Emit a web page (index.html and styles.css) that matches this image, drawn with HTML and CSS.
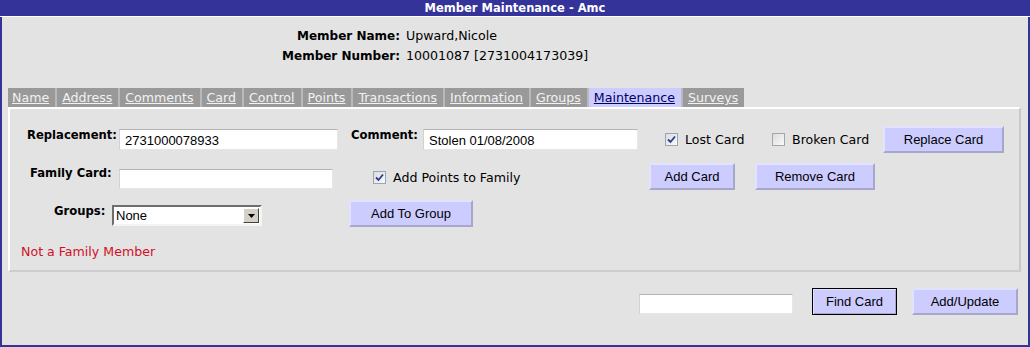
FILE: index.html
```html
<!DOCTYPE html>
<html lang="en">
<head>
    <meta charset="UTF-8">
    <title>Member Maintenance - Amc</title>
    <link rel="stylesheet" href="styles.css">
</head>
<body>
    <div class="window">
        <div class="title-bar">Member Maintenance - Amc</div>
        <div class="content">
            <div class="member-info">
                <span class="info-label">Member Name:</span>
                <span>Upward,Nicole</span>
                <span class="info-label">Member Number:</span>
                <span>10001087 [2731004173039]</span>
            </div>

            <ul class="tabs">
                <li><a href="#">Name</a></li>
                <li><a href="#">Address</a></li>
                <li><a href="#">Comments</a></li>
                <li><a href="#">Card</a></li>
                <li><a href="#">Control</a></li>
                <li><a href="#">Points</a></li>
                <li><a href="#">Transactions</a></li>
                <li><a href="#">Information</a></li>
                <li><a href="#">Groups</a></li>
                <li class="active"><a href="#">Maintenance</a></li>
                <li><a href="#">Surveys</a></li>
            </ul>

            <div class="panel">
                <div class="form-row">
                    <label class="field-label lbl-replacement">Replacement:</label>
                    <input type="text" class="text-input in-replacement" value="2731000078933">
                    <label class="field-label lbl-comment">Comment:</label>
                    <input type="text" class="text-input in-comment" value="Stolen 01/08/2008">
                    <span class="check chk-lost">
                        <svg width="9" height="9" viewBox="0 0 9 9"><path d="M1 4.5 L3.5 7 L8 1.5" fill="none" stroke="#2a3a8c" stroke-width="1.8"/></svg>
                    </span>
                    <span class="check-text txt-lost">Lost Card</span>
                    <span class="check"></span>
                    <span class="check-text txt-broken">Broken Card</span>
                    <button class="btn btn-replace">Replace Card</button>
                </div>

                <div class="form-row">
                    <label class="field-label lbl-family">Family Card:</label>
                    <input type="text" class="text-input in-family" value="">
                    <span class="check chk-points">
                        <svg width="9" height="9" viewBox="0 0 9 9"><path d="M1 4.5 L3.5 7 L8 1.5" fill="none" stroke="#2a3a8c" stroke-width="1.8"/></svg>
                    </span>
                    <span class="check-text txt-points">Add Points to Family</span>
                    <button class="btn btn-add-card">Add Card</button>
                    <button class="btn btn-remove-card">Remove Card</button>
                </div>

                <div class="form-row">
                    <label class="field-label lbl-groups">Groups:</label>
                    <div class="select">
                        <span class="select-value">None</span>
                        <span class="select-arrow">
                            <svg width="7" height="4" viewBox="0 0 7 4"><path d="M0 0 H7 L3.5 4 Z" fill="#000"/></svg>
                        </span>
                    </div>
                    <button class="btn btn-add-group">Add To Group</button>
                </div>

                <div class="status">Not a Family Member</div>
            </div>

            <div class="footer">
                <input type="text" class="text-input in-find" value="">
                <button class="btn btn-find">Find Card</button>
                <button class="btn btn-update">Add/Update</button>
            </div>
        </div>
    </div>
</body>
</html>
```

FILE: styles.css
```css
body {
    margin: 0;
    padding: 0;
    font-family: 'DejaVu Sans', Verdana, sans-serif;
    font-size: 12px;
    color: #000;
}

.window {
    width: 1030px;
    height: 347px;
    box-sizing: border-box;
    border: 2px solid #333399;
    border-top: none;
    background-color: #e3e3e3;
    display: flex;
    flex-direction: column;
}

.title-bar {
    height: 16px;
    background-color: #333399;
    color: #fff;
    font-weight: bold;
    font-size: 11.5px;
    line-height: 16px;
    text-align: center;
    border-bottom: 1px solid #fff;
    margin: 0 -2px;
}

.content {
    flex-grow: 1;
    display: flex;
    flex-direction: column;
}

/* member header */
.member-info {
    display: grid;
    grid-template-columns: 398px auto;
    column-gap: 6px;
    row-gap: 4px;
    line-height: 16px;
    margin-top: 11px;
    font-size: 12.6px;
}

.info-label {
    text-align: right;
    font-weight: bold;
    font-size: 12px;
}

/* tabs */
.tabs {
    list-style-type: none;
    margin: 24px 0 0 6px;
    padding: 0;
    display: flex;
    height: 19px;
}

.tabs li {
    background-color: #999999;
    padding: 0 6px 0 5px;
    border-right: 2px solid #b9b9b9;
    line-height: 19px;
    font-size: 12.6px;
}

.tabs li:first-child {
    padding-left: 4px;
}

.tabs li:last-child {
    border-right: none;
}

.tabs a {
    color: #f2f2f2;
}

.tabs li.active {
    background-color: #ccccff;
}

.tabs li.active a {
    color: #000066;
}

/* main panel */
.panel {
    margin: 0 7px 0 6px;
    border: 2px solid;
    border-color: #fff #c9c9c9 #cdcdcd #fff;
    padding: 16px 0 10px 0;
}

.form-row {
    display: flex;
    align-items: center;
    height: 28px;
    margin-bottom: 9px;
}

.field-label {
    font-weight: bold;
    font-size: 11.6px;
    align-self: flex-start;
    margin-top: 3px;
    line-height: 15px;
}

.lbl-replacement { margin-left: 17px; width: 92px; }
.lbl-comment { margin-left: 13px; width: 72px; }
.lbl-family { margin-left: 20px; width: 89px; margin-top: 4px; }
.lbl-groups { margin-left: 44px; width: 58px; margin-top: 5px; }

.text-input {
    height: 21px;
    box-sizing: border-box;
    border: 1px solid #e6e6e6;
    border-top-color: #b4b4b4;
    border-left-color: #d2d2d2;
    background-color: #fff;
    font-family: 'Liberation Sans', Arial, sans-serif;
    font-size: 13px;
    padding: 2px 5px 0 5px;
    outline: none;
}

.in-replacement { width: 219px; }
.in-comment { width: 215px; }
.in-family { width: 214px; height: 20px; margin-top: 6px; }
.in-find { width: 154px; height: 20px; margin-top: 6px; }

.check {
    width: 13px;
    height: 13px;
    box-sizing: border-box;
    border: 1px solid #9aa6b8;
    background: linear-gradient(135deg, #dcdcdc, #fafafa);
    display: flex;
    align-items: center;
    justify-content: center;
    flex-shrink: 0;
}

.chk-lost { margin-left: 27px; }
.chk-points { margin-left: 40px; margin-top: 2px; }

.check-text {
    margin-left: 7px;
    font-size: 12.6px;
}

.txt-lost { width: 87px; }
.txt-broken { width: 91px; }
.txt-points { width: 256px; margin-top: 2px; }

.check + .check-text + .check {
    border-color: #a6a6a6;
}

.btn {
    font-family: 'Liberation Sans', Arial, sans-serif;
    font-size: 13px;
    background-color: #ccccff;
    border: 2px solid;
    border-color: #e2e2ff #a7a7c9 #a7a7c9 #e2e2ff;
    height: 27px;
    padding: 0;
    color: #000;
}

.btn-replace { width: 121px; }
.btn-add-card { width: 86px; }
.btn-remove-card { width: 120px; margin-left: 20px; }
.btn-add-group { width: 124px; margin-left: 87px; }

.select {
    width: 150px;
    height: 21px;
    box-sizing: border-box;
    background-color: #fff;
    border: 2px solid;
    border-color: #6e6e6e #f4f4f4 #f4f4f4 #6e6e6e;
    display: flex;
    align-items: center;
    justify-content: space-between;
    margin-top: 5px;
}

.select-value {
    font-family: 'Liberation Sans', Arial, sans-serif;
    font-size: 13px;
    padding-left: 2px;
}

.select-arrow {
    width: 16px;
    height: 15px;
    box-sizing: border-box;
    background-color: #d4d0c8;
    border: 1px solid;
    border-color: #fff #404040 #404040 #fff;
    display: flex;
    align-items: center;
    justify-content: center;
    margin-right: 1px;
}

.status {
    color: #d01028;
    font-size: 12.6px;
    line-height: 16px;
    margin: 17px 0 0 11px;
}

/* bottom bar */
.footer {
    display: flex;
    justify-content: flex-end;
    align-items: flex-start;
    padding-right: 10px;
    margin-top: 16px;
}

.btn-find {
    width: 85px;
    margin-left: 19px;
    border: 1px solid #000;
    box-shadow: inset 1px 1px 0 #e2e2ff, inset -1px -1px 0 #a7a7c9;
}

.btn-update {
    width: 106px;
    margin-left: 15px;
}
```
